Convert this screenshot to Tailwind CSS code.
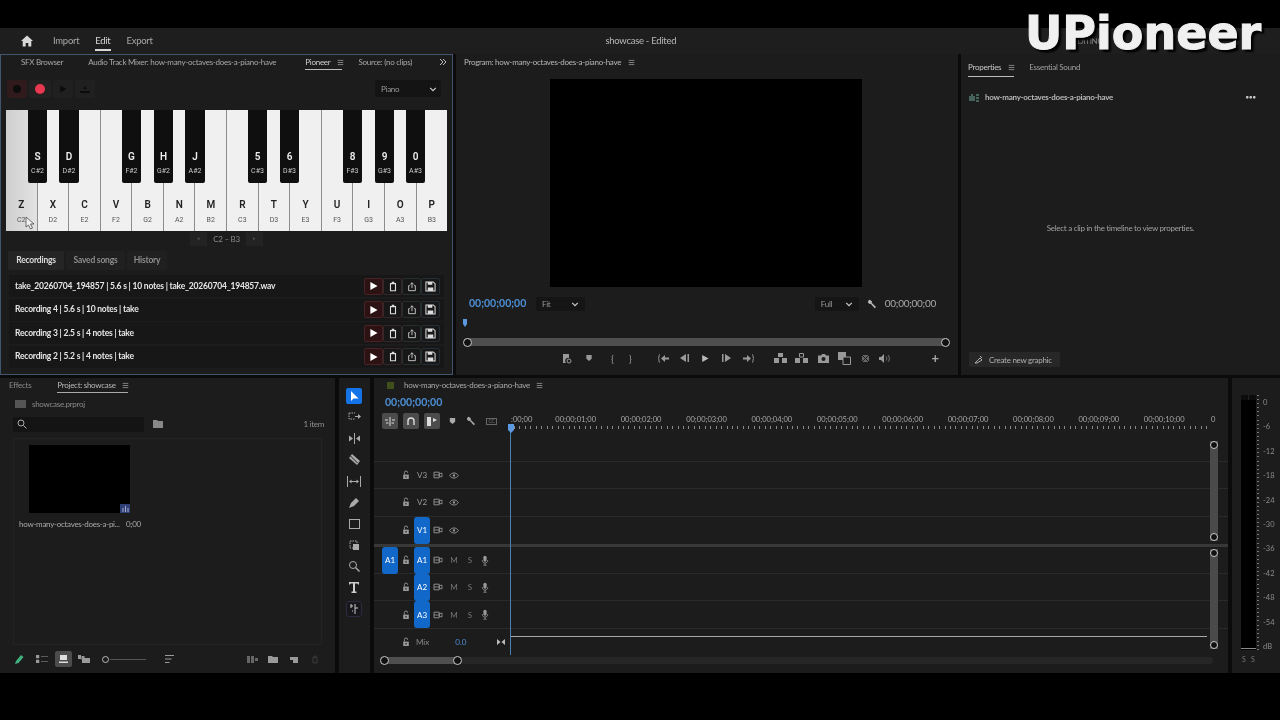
<!DOCTYPE html>
<html>
<head>
<meta charset="utf-8">
<script src="https://cdn.jsdelivr.net/npm/@tailwindcss/browser@4"></script>
</head>
<body class="bg-black">
<svg class="hidden">
  <symbol id="menu" viewBox="0 0 10 10"><path d="M1 2h8M1 5h8M1 8h8" stroke="currentColor" stroke-width="1" fill="none"/></symbol>
  <symbol id="chev" viewBox="0 0 10 10"><path d="M1.500 3.500L5 7l3.500-3.500" stroke="currentColor" stroke-width="1.500" fill="none"/></symbol>
  <symbol id="play" viewBox="0 0 10 10"><path d="M1.500 0.500L9.500 5l-8 4.500z" fill="currentColor"/></symbol>
  <symbol id="trash" viewBox="0 0 12 12"><path d="M4.500 1h3M3 2.500h6v8.500H3z" stroke="currentColor" stroke-width="1.300" fill="none"/></symbol>
  <symbol id="share" viewBox="0 0 12 12"><path d="M3.500 5H2v6h8V5H8.500M6 8V1.500M4 3.500L6 1.500l2 2" stroke="currentColor" stroke-width="1.100" fill="none"/></symbol>
  <symbol id="save" viewBox="0 0 12 12"><path d="M1 1h8l2 2v8H1z" stroke="currentColor" stroke-width="1.100" fill="none"/><path d="M3 1h5v3H3zM3 7h6v4H3z" fill="currentColor"/></symbol>
  <symbol id="lock" viewBox="0 0 10 12"><path d="M1.500 5.500h7v5.500h-7z" fill="currentColor"/><path d="M3 5.500V3a2 2 0 0 1 4 0v.5" stroke="currentColor" stroke-width="1.100" fill="none"/><rect x="4.300" y="7.200" width="1.400" height="2" fill="#1c1c1c"/></symbol>
  <symbol id="film" viewBox="0 0 12 10"><path d="M1 1.500h6.500v7H1z" stroke="currentColor" stroke-width="1.100" fill="none"/><path d="M7.500 3.500L11 2.500v5l-3.500-1z" stroke="currentColor" stroke-width="1" fill="none"/><path d="M1 5h6" stroke="currentColor"/></symbol>
  <symbol id="eye" viewBox="0 0 12 8"><path d="M.8 4C2.500 1.600 4 1 6 1s3.500.6 5.200 3C9.500 6.400 8 7 6 7S2.500 6.400.8 4z" stroke="currentColor" stroke-width="1.100" fill="none"/><circle cx="6" cy="4" r="1.400" fill="currentColor"/></symbol>
  <symbol id="mic" viewBox="0 0 10 14"><rect x="3" y="1" width="4" height="7.500" rx="2" fill="currentColor"/><path d="M1.500 6.500c0 5 7 5 7 0M5 10.500V13M3 13h4" stroke="currentColor" fill="none"/></symbol>
  <symbol id="wrench" viewBox="0 0 12 12"><path d="M2 1.500l1.500-.5 2.500 2-.4 1.500L10.800 9.500 9.300 11 4.500 5.800 3 6 1 3.800z" fill="currentColor"/></symbol>
  <symbol id="marker" viewBox="0 0 10 12"><path d="M1 1.500h8v5.500L5 10.500 1 7z" fill="currentColor"/></symbol>
</svg>

<div class="w-[1280px] h-[720px] flex flex-col bg-black overflow-hidden relative font-['Lato',sans-serif] whitespace-nowrap tracking-[-0.28px] text-[9px] text-[#b4b4b4] blur-[0.35px]">
  <div class="h-[28px] shrink-0 bg-black"></div>

  <!-- app header -->
  <header class="h-[26px] shrink-0 bg-[#1e1e1e] relative flex items-center pl-[21px]">
    <svg class="w-[12px] h-[12px] text-[#d8d8d8]" viewBox="0 0 12 12"><path d="M6 .5L0 6h1.700v5.500h3V8h2.600v3.500h3V6H12z" fill="currentColor"/></svg>
    <nav class="flex ml-[20px] gap-[16px] text-[#a8a8a8] text-[9.500px]">
      <span>Import</span>
      <span class="text-[#d8d8d8] relative">Edit<span class="absolute left-0 right-0 top-[15px] h-[2px] bg-[#d8d8d8]"></span></span>
      <span>Export</span>
    </nav>
    <div class="flex-1 flex justify-center ml-[50px] text-[#b8b8b8] text-[9.500px]">showcase - Edited</div>
    <div class="w-[201px] shrink-0 text-[8px] flex items-center justify-end pr-[12px]">
      <span class="mr-[165px] text-[#888]">EDITING</span>
      <svg class="w-[10px] h-[10px] text-[#aaa]" viewBox="0 0 10 10"><path d="M6 1h3v3M9 1L6 4M1 6v3h3M1 9l3-3" stroke="currentColor" fill="none"/></svg>
    </div>
  </header>

  <!-- upper row -->
  <div class="h-[321px] shrink-0 flex gap-[3px] bg-[#0b0b0b]">
    <!-- Pioneer panel -->
    <section class="w-[453px] shrink-0 bg-[#1c1c1c] border border-[#41556e] flex flex-col px-[5px]">
      <div class="h-[14px] shrink-0 flex items-center relative text-[#a8a8a8] text-[8px]">
        <span class="ml-[15px]">SFX Browser</span>
        <span class="ml-[25px]">Audio Track Mixer: how-many-octaves-does-a-piano-have</span>
        <span class="ml-[29px] text-[#cfcfcf] relative">Pioneer<span class="absolute left-0 w-[37px] top-[13px] h-px bg-[#bbb]"></span></span>
        <svg class="w-[7px] h-[7px] ml-[7px] text-[#aaa]"><use href="#menu"/></svg>
        <span class="ml-[14px]">Source: (no clips)</span>
        <svg class="w-[8px] h-[8px] ml-auto text-[#bbb]" viewBox="0 0 8 8"><path d="M1 1l3 3-3 3M4 1l3 3-3 3" stroke="currentColor" fill="none"/></svg>
      </div>
      <div class="h-[17px] mt-[11px] shrink-0 flex items-center gap-[2px] pl-[1px]">
        <span class="w-[20px] h-[18px] rounded-[2px] bg-[#301a1c] flex items-center justify-center"><span class="w-[8px] h-[8px] rounded-full bg-[#0c0c0c]"></span></span>
        <span class="w-[22px] h-[18px] rounded-[2px] bg-[#222020] flex items-center justify-center"><span class="w-[10px] h-[10px] rounded-full bg-[#e8384f]"></span></span>
        <span class="w-[20px] h-[18px] rounded-[2px] bg-[#202020] flex items-center justify-center text-[#0c0c0c]"><svg class="w-[8px] h-[8px]"><use href="#play"/></svg></span>
        <span class="w-[20px] h-[18px] rounded-[2px] bg-[#202020] flex items-center justify-center"><svg class="w-[10px] h-[8px] text-[#0c0c0c]" viewBox="0 0 10 8"><path d="M5 1L7 4H3zM0 6h10v2H0z" fill="currentColor"/></svg></span>
        <span class="ml-auto mr-[6px] w-[66px] h-[17px] bg-[#141414] rounded-[2px] flex items-center justify-between pl-[6px] pr-[4px] text-[8px] text-[#999]">Piano<svg class="w-[8px] h-[8px] text-[#ccc]"><use href="#chev"/></svg></span>
      </div>

      <!-- keyboard -->
      <div class="relative h-[121px] mt-[13px] shrink-0 flex gap-[1px] w-[441px] bg-[#8d8d8d] font-['Roboto',sans-serif] tracking-normal">
        <div class="flex-1 bg-gradient-to-r from-[#cfcfcf] to-[#e2e2e2] flex flex-col items-center justify-end pb-[6px] text-[#222]"><b class="text-[10px] font-semibold leading-[14px]">Z</b><span class="text-[7px] leading-[10px] mt-[3px] text-[#555]">C2</span></div>
        <div class="flex-1 bg-[#f0f0f0] flex flex-col items-center justify-end pb-[6px] text-[#222]"><b class="text-[10px] font-semibold leading-[14px]">X</b><span class="text-[7px] leading-[10px] mt-[3px] text-[#555]">D2</span></div>
        <div class="flex-1 bg-[#f0f0f0] flex flex-col items-center justify-end pb-[6px] text-[#222]"><b class="text-[10px] font-semibold leading-[14px]">C</b><span class="text-[7px] leading-[10px] mt-[3px] text-[#555]">E2</span></div>
        <div class="flex-1 bg-[#f0f0f0] flex flex-col items-center justify-end pb-[6px] text-[#222]"><b class="text-[10px] font-semibold leading-[14px]">V</b><span class="text-[7px] leading-[10px] mt-[3px] text-[#555]">F2</span></div>
        <div class="flex-1 bg-[#f0f0f0] flex flex-col items-center justify-end pb-[6px] text-[#222]"><b class="text-[10px] font-semibold leading-[14px]">B</b><span class="text-[7px] leading-[10px] mt-[3px] text-[#555]">G2</span></div>
        <div class="flex-1 bg-[#f0f0f0] flex flex-col items-center justify-end pb-[6px] text-[#222]"><b class="text-[10px] font-semibold leading-[14px]">N</b><span class="text-[7px] leading-[10px] mt-[3px] text-[#555]">A2</span></div>
        <div class="flex-1 bg-[#f0f0f0] flex flex-col items-center justify-end pb-[6px] text-[#222]"><b class="text-[10px] font-semibold leading-[14px]">M</b><span class="text-[7px] leading-[10px] mt-[3px] text-[#555]">B2</span></div>
        <div class="flex-1 bg-[#f0f0f0] flex flex-col items-center justify-end pb-[6px] text-[#222]"><b class="text-[10px] font-semibold leading-[14px]">R</b><span class="text-[7px] leading-[10px] mt-[3px] text-[#555]">C3</span></div>
        <div class="flex-1 bg-[#f0f0f0] flex flex-col items-center justify-end pb-[6px] text-[#222]"><b class="text-[10px] font-semibold leading-[14px]">T</b><span class="text-[7px] leading-[10px] mt-[3px] text-[#555]">D3</span></div>
        <div class="flex-1 bg-[#f0f0f0] flex flex-col items-center justify-end pb-[6px] text-[#222]"><b class="text-[10px] font-semibold leading-[14px]">Y</b><span class="text-[7px] leading-[10px] mt-[3px] text-[#555]">E3</span></div>
        <div class="flex-1 bg-[#f0f0f0] flex flex-col items-center justify-end pb-[6px] text-[#222]"><b class="text-[10px] font-semibold leading-[14px]">U</b><span class="text-[7px] leading-[10px] mt-[3px] text-[#555]">F3</span></div>
        <div class="flex-1 bg-[#f0f0f0] flex flex-col items-center justify-end pb-[6px] text-[#222]"><b class="text-[10px] font-semibold leading-[14px]">I</b><span class="text-[7px] leading-[10px] mt-[3px] text-[#555]">G3</span></div>
        <div class="flex-1 bg-[#f0f0f0] flex flex-col items-center justify-end pb-[6px] text-[#222]"><b class="text-[10px] font-semibold leading-[14px]">O</b><span class="text-[7px] leading-[10px] mt-[3px] text-[#555]">A3</span></div>
        <div class="flex-1 bg-[#f0f0f0] flex flex-col items-center justify-end pb-[6px] text-[#222]"><b class="text-[10px] font-semibold leading-[14px]">P</b><span class="text-[7px] leading-[10px] mt-[3px] text-[#555]">B3</span></div>
        <!-- black keys -->
        <div class="absolute top-0 left-[22px] w-[19px] h-[73px] bg-[#0f0f0f] rounded-b-[2px] flex flex-col items-center justify-end pb-[7px] text-[#eee]"><b class="text-[10px] font-semibold leading-[14px]">S</b><span class="text-[7px] leading-[10px] mt-[2px] text-[#ccc]">C#2</span></div>
        <div class="absolute top-0 left-[53px] w-[20px] h-[73px] bg-[#0f0f0f] rounded-b-[2px] flex flex-col items-center justify-end pb-[7px] text-[#eee]"><b class="text-[10px] font-semibold leading-[14px]">D</b><span class="text-[7px] leading-[10px] mt-[2px] text-[#ccc]">D#2</span></div>
        <div class="absolute top-0 left-[116px] w-[19px] h-[73px] bg-[#0f0f0f] rounded-b-[2px] flex flex-col items-center justify-end pb-[7px] text-[#eee]"><b class="text-[10px] font-semibold leading-[14px]">G</b><span class="text-[7px] leading-[10px] mt-[2px] text-[#ccc]">F#2</span></div>
        <div class="absolute top-0 left-[148px] w-[19px] h-[73px] bg-[#0f0f0f] rounded-b-[2px] flex flex-col items-center justify-end pb-[7px] text-[#eee]"><b class="text-[10px] font-semibold leading-[14px]">H</b><span class="text-[7px] leading-[10px] mt-[2px] text-[#ccc]">G#2</span></div>
        <div class="absolute top-0 left-[179px] w-[20px] h-[73px] bg-[#0f0f0f] rounded-b-[2px] flex flex-col items-center justify-end pb-[7px] text-[#eee]"><b class="text-[10px] font-semibold leading-[14px]">J</b><span class="text-[7px] leading-[10px] mt-[2px] text-[#ccc]">A#2</span></div>
        <div class="absolute top-0 left-[242px] w-[19px] h-[73px] bg-[#0f0f0f] rounded-b-[2px] flex flex-col items-center justify-end pb-[7px] text-[#eee]"><b class="text-[10px] font-semibold leading-[14px]">5</b><span class="text-[7px] leading-[10px] mt-[2px] text-[#ccc]">C#3</span></div>
        <div class="absolute top-0 left-[274px] w-[19px] h-[73px] bg-[#0f0f0f] rounded-b-[2px] flex flex-col items-center justify-end pb-[7px] text-[#eee]"><b class="text-[10px] font-semibold leading-[14px]">6</b><span class="text-[7px] leading-[10px] mt-[2px] text-[#ccc]">D#3</span></div>
        <div class="absolute top-0 left-[337px] w-[19px] h-[73px] bg-[#0f0f0f] rounded-b-[2px] flex flex-col items-center justify-end pb-[7px] text-[#eee]"><b class="text-[10px] font-semibold leading-[14px]">8</b><span class="text-[7px] leading-[10px] mt-[2px] text-[#ccc]">F#3</span></div>
        <div class="absolute top-0 left-[369px] w-[19px] h-[73px] bg-[#0f0f0f] rounded-b-[2px] flex flex-col items-center justify-end pb-[7px] text-[#eee]"><b class="text-[10px] font-semibold leading-[14px]">9</b><span class="text-[7px] leading-[10px] mt-[2px] text-[#ccc]">G#3</span></div>
        <div class="absolute top-0 left-[400px] w-[19px] h-[73px] bg-[#0f0f0f] rounded-b-[2px] flex flex-col items-center justify-end pb-[7px] text-[#eee]"><b class="text-[10px] font-semibold leading-[14px]">0</b><span class="text-[7px] leading-[10px] mt-[2px] text-[#ccc]">A#3</span></div>
        <!-- cursor -->
        <svg class="absolute left-[19px] top-[106px] w-[10px] h-[14px]" viewBox="0 0 10 14"><path d="M1 1v10l2.500-2 2 4 2-1-2-4H9z" fill="#f2f2f2" stroke="#333" stroke-width=".7"/></svg>
      </div>

      <div class="h-[14px] mt-[1px] shrink-0 flex items-center justify-center gap-[3px] w-[441px] text-[8px] text-[#888]">
        <span class="w-[17px] h-[14px] bg-[#232323] flex items-center justify-center text-[5px] text-[#555]">◂</span>
        <span class="w-[33px] text-center">C2 – B3</span>
        <span class="w-[17px] h-[14px] bg-[#232323] flex items-center justify-center text-[5px] text-[#555]">▸</span>
      </div>

      <div class="h-[19px] mt-[5px] shrink-0 flex gap-[2px] pl-[2px] text-[8.500px] font-bold tracking-[-0.2px]">
        <span class="w-[56px] bg-[#252525] rounded-[2px] flex items-center justify-center text-[#dcdcdc]">Recordings</span>
        <span class="w-[59px] bg-[#202020] rounded-[2px] flex items-center justify-center text-[#8d8d8d]">Saved songs</span>
        <span class="w-[40px] bg-[#202020] rounded-[2px] flex items-center justify-center text-[#8d8d8d]">History</span>
      </div>

      <ul class="mt-[5px] ml-[3px] mr-[3px] flex flex-col gap-[1.500px] text-[#e6e6e6] font-bold text-[8.500px] tracking-[-0.2px]">
        <li class="h-[22px] bg-[#171717] rounded-[2px] flex items-center pl-[6px] pr-[4px]">
          <span class="flex-1">take_20260704_194857 | 5.6 s | 10 notes | take_20260704_194857.wav</span>
          <span class="w-[19px] h-[17px] rounded-[2px] bg-[#2d1214] border border-[#4a2226] flex items-center justify-center text-white"><svg class="w-[9px] h-[10px]"><use href="#play"/></svg></span>
          <span class="w-[19px] h-[17px] rounded-[2px] border border-[#352628] flex items-center justify-center text-[#ddd]"><svg class="w-[10px] h-[11px]"><use href="#trash"/></svg></span>
          <span class="w-[19px] h-[17px] rounded-[2px] border border-[#25302b] flex items-center justify-center text-[#ccc]"><svg class="w-[10px] h-[11px]"><use href="#share"/></svg></span>
          <span class="w-[19px] h-[17px] rounded-[2px] border border-[#252d35] flex items-center justify-center text-[#ddd]"><svg class="w-[11px] h-[11px]"><use href="#save"/></svg></span>
        </li>
        <li class="h-[22px] bg-[#171717] rounded-[2px] flex items-center pl-[6px] pr-[4px]">
          <span class="flex-1">Recording 4 | 5.6 s | 10 notes | take</span>
          <span class="w-[19px] h-[17px] rounded-[2px] bg-[#2d1214] border border-[#4a2226] flex items-center justify-center text-white"><svg class="w-[9px] h-[10px]"><use href="#play"/></svg></span>
          <span class="w-[19px] h-[17px] rounded-[2px] border border-[#352628] flex items-center justify-center text-[#ddd]"><svg class="w-[10px] h-[11px]"><use href="#trash"/></svg></span>
          <span class="w-[19px] h-[17px] rounded-[2px] border border-[#25302b] flex items-center justify-center text-[#ccc]"><svg class="w-[10px] h-[11px]"><use href="#share"/></svg></span>
          <span class="w-[19px] h-[17px] rounded-[2px] border border-[#252d35] flex items-center justify-center text-[#ddd]"><svg class="w-[11px] h-[11px]"><use href="#save"/></svg></span>
        </li>
        <li class="h-[22px] bg-[#171717] rounded-[2px] flex items-center pl-[6px] pr-[4px]">
          <span class="flex-1">Recording 3 | 2.5 s | 4 notes | take</span>
          <span class="w-[19px] h-[17px] rounded-[2px] bg-[#2d1214] border border-[#4a2226] flex items-center justify-center text-white"><svg class="w-[9px] h-[10px]"><use href="#play"/></svg></span>
          <span class="w-[19px] h-[17px] rounded-[2px] border border-[#352628] flex items-center justify-center text-[#ddd]"><svg class="w-[10px] h-[11px]"><use href="#trash"/></svg></span>
          <span class="w-[19px] h-[17px] rounded-[2px] border border-[#25302b] flex items-center justify-center text-[#ccc]"><svg class="w-[10px] h-[11px]"><use href="#share"/></svg></span>
          <span class="w-[19px] h-[17px] rounded-[2px] border border-[#252d35] flex items-center justify-center text-[#ddd]"><svg class="w-[11px] h-[11px]"><use href="#save"/></svg></span>
        </li>
        <li class="h-[22px] bg-[#171717] rounded-[2px] flex items-center pl-[6px] pr-[4px]">
          <span class="flex-1">Recording 2 | 5.2 s | 4 notes | take</span>
          <span class="w-[19px] h-[17px] rounded-[2px] bg-[#2d1214] border border-[#4a2226] flex items-center justify-center text-white"><svg class="w-[9px] h-[10px]"><use href="#play"/></svg></span>
          <span class="w-[19px] h-[17px] rounded-[2px] border border-[#352628] flex items-center justify-center text-[#ddd]"><svg class="w-[10px] h-[11px]"><use href="#trash"/></svg></span>
          <span class="w-[19px] h-[17px] rounded-[2px] border border-[#25302b] flex items-center justify-center text-[#ccc]"><svg class="w-[10px] h-[11px]"><use href="#share"/></svg></span>
          <span class="w-[19px] h-[17px] rounded-[2px] border border-[#252d35] flex items-center justify-center text-[#ddd]"><svg class="w-[11px] h-[11px]"><use href="#save"/></svg></span>
        </li>
      </ul>
    </section>

    <!-- program monitor -->
    <section class="w-[502px] shrink-0 bg-[#1c1c1c] flex flex-col">
      <div class="h-[16px] shrink-0 flex items-center pl-[8px] text-[8px] text-[#b8b8b8]">Program: how-many-octaves-does-a-piano-have<svg class="w-[7px] h-[7px] ml-[7px] text-[#aaa]"><use href="#menu"/></svg></div>
      <div class="mt-[9px] ml-[94px] w-[312px] h-[208px] shrink-0 bg-black"></div>
      <div class="h-[17px] mt-[8px] shrink-0 flex items-center pl-[13px] pr-[22px]">
        <span class="text-[#4d8fd6] text-[10.500px] font-bold tracking-normal w-[67px]">00;00;00;00</span>
        <span class="w-[49px] h-[14px] bg-[#151515] rounded-[2px] flex items-center justify-between px-[6px] text-[8px] text-[#999]">Fit<svg class="w-[8px] h-[8px] text-[#ccc]"><use href="#chev"/></svg></span>
        <span class="ml-auto w-[44px] h-[14px] bg-[#151515] rounded-[2px] flex items-center justify-between px-[6px] text-[8px] text-[#999]">Full<svg class="w-[8px] h-[8px] text-[#ccc]"><use href="#chev"/></svg></span>
        <svg class="w-[10px] h-[10px] ml-[8px] text-[#bbb]"><use href="#wrench"/></svg>
        <span class="ml-[8px] text-[10px] text-[#a8a8a8]">00;00;00;00</span>
      </div>
      <div class="h-[26px] shrink-0 pl-[7px] pt-[7px]"><svg class="block w-[4px] h-[8px]" viewBox="0 0 4 8"><path d="M0 0h4v5L2 8 0 5z" fill="#5b9ae0"/></svg></div>
      <div class="ml-[8px] w-[485px] h-[8px] shrink-0 rounded-full bg-[#4f4f4f] relative">
        <span class="absolute left-[-1px] top-[-0.500px] w-[9px] h-[9px] rounded-full bg-[#111] border border-[#ccc]"></span>
        <span class="absolute right-[-1px] top-[-0.500px] w-[9px] h-[9px] rounded-full bg-[#111] border border-[#ccc]"></span>
      </div>
      <div class="mt-[5px] h-[14px] shrink-0 flex items-center text-[#999]">
        <svg class="ml-[106px] w-[10px] h-[11px]" viewBox="0 0 10 11"><path d="M1 1h6v4a3 3 0 0 0-3 5H1z" fill="currentColor"/><circle cx="7" cy="8" r="2" fill="none" stroke="currentColor"/></svg>
        <svg class="ml-[13px] w-[8px] h-[8px]"><use href="#marker"/></svg>
        <span class="ml-[18px] text-[10px] leading-none">{</span>
        <span class="ml-[15px] text-[10px] leading-none">}</span>
        <svg class="ml-[27px] w-[11px] h-[9px]" viewBox="0 0 11 9"><path d="M2 .5C1 .5 1 2 1 3S0 4.500 0 4.500 1 5 1 6s0 2.500 1 2.500" stroke="currentColor" fill="none"/><path d="M3 4.500L7 1v2.500h4v2H7V8z" fill="currentColor"/></svg>
        <svg class="ml-[11px] w-[9px] h-[8px]" viewBox="0 0 9 8"><path d="M6 0v8L0 4zM7.500 0H9v8H7.500z" fill="currentColor"/></svg>
        <svg class="ml-[12px] w-[8px] h-[9px] text-[#bbb]"><use href="#play"/></svg>
        <svg class="ml-[13px] w-[9px] h-[8px]" viewBox="0 0 9 8"><path d="M3 0v8l6-4zM0 0h1.500v8H0z" fill="currentColor"/></svg>
        <svg class="ml-[12px] w-[11px] h-[9px]" viewBox="0 0 11 9"><path d="M9 .5c1 0 1 1.500 1 2.500s1 1.500 1 1.500-1 .5-1 1.500 0 2.500-1 2.500" stroke="currentColor" fill="none"/><path d="M8 4.500L4 1v2.500H0v2h4V8z" fill="currentColor"/></svg>
        <svg class="ml-[20px] w-[13px] h-[10px]" viewBox="0 0 13 10"><path d="M0 5h5v5H0zM8 5h5v5H8zM4 0h5v4H4z" fill="currentColor"/></svg>
        <svg class="ml-[8px] w-[13px] h-[10px]" viewBox="0 0 13 10"><path d="M0 5h5v5H0zM8 5h5v5H8z" fill="currentColor"/><path d="M4.500.5h4v3.500h-4z" stroke="currentColor" fill="none"/></svg>
        <svg class="ml-[10px] w-[11px] h-[9px]" viewBox="0 0 11 9"><path d="M0 1.500h3L4 0h3l1 1.500h3V9H0z" fill="currentColor"/><circle cx="5.500" cy="5" r="2" fill="#1c1c1c"/></svg>
        <svg class="ml-[9px] w-[13px] h-[13px]" viewBox="0 0 13 13"><path d="M0 0h8v8H0z" fill="currentColor"/><path d="M5 5h7.500v7.500H5z" stroke="currentColor" fill="#1c1c1c"/></svg>
        <svg class="ml-[10px] w-[9px] h-[9px] text-[#666]" viewBox="0 0 9 9"><path d="M1 1h7v7H1z" fill="currentColor"/><path d="M1 1l7 7M8 1L1 8" stroke="#1c1c1c"/></svg>
        <svg class="ml-[9px] w-[11px] h-[9px]" viewBox="0 0 11 9"><path d="M0 3h2l3-3v9L2 6H0z" fill="currentColor"/><path d="M7 2.500c1 1 1 3 0 4M9 1c1.800 2 1.800 5 0 7" stroke="currentColor" fill="none" stroke-width=".7"/></svg>
        <span class="ml-[41px] text-[#aaa] text-[13px] leading-none font-bold">+</span>
      </div>
    </section>

    <!-- properties -->
    <section class="flex-1 bg-[#1c1c1c] flex flex-col px-[7px]">
      <div class="h-[26px] shrink-0 flex items-center text-[8px]">
        <span class="text-[#c8c8c8] relative">Properties<span class="absolute left-0 w-[46px] top-[15px] h-px bg-[#bbb]"></span></span>
        <svg class="w-[7px] h-[7px] ml-[7px] text-[#aaa]"><use href="#menu"/></svg>
        <span class="ml-[14px] text-[#a0a0a0]">Essential Sound</span>
      </div>
      <div class="h-[34px] shrink-0 flex items-center font-bold text-[8px] text-[#b8b8b8]">
        <svg class="w-[10px] h-[9px] mr-[6px] ml-[1px] text-[#6fa89a]" viewBox="0 0 10 9"><path d="M1 3v5M3 1v7M5 3v5M7 2h3M7 5h3M7 8h3" stroke="currentColor" fill="none"/></svg>
        how-many-octaves-does-a-piano-have
        <span class="ml-auto mr-[17px] text-[#c8c8c8] font-bold tracking-normal text-[6px] leading-none">•••</span>
      </div>
      <div class="flex-1 flex items-center justify-center text-[8px] text-[#a0a0a0] pb-[11px]">Select a clip in the timeline to view properties.</div>
      <div class="h-[15px] mb-[8px] ml-[1px] w-[91px] shrink-0 bg-[#272727] rounded-[2px] flex items-center text-[8px] text-[#b0b0b0] pl-[5px]">
        <svg class="w-[9px] h-[9px] mr-[6px]" viewBox="0 0 9 9"><path d="M1 8l5-5 2 2-5 3zM6 1l2 2" stroke="currentColor" fill="none"/></svg>
        Create new graphic
      </div>
    </section>
  </div>

  <div class="h-[3px] shrink-0 bg-[#0b0b0b]"></div>

  <!-- lower row -->
  <div class="h-[295px] shrink-0 flex gap-[4px] bg-[#0b0b0b]">
    <!-- project -->
    <section class="w-[335px] shrink-0 bg-[#1c1c1c] flex flex-col px-[13px]">
      <div class="h-[14px] shrink-0 flex items-center text-[8px] -ml-[4px]">
        <span class="text-[#8a8a8a]">Effects</span>
        <span class="ml-[26px] text-[#b8b8b8] relative">Project: showcase<span class="absolute left-0 w-[71px] top-[13px] h-px bg-[#aaa]"></span></span>
        <svg class="w-[7px] h-[7px] ml-[6px] text-[#aaa]"><use href="#menu"/></svg>
      </div>
      <div class="h-[16px] mt-[4px] shrink-0 flex items-center text-[8px] text-[#8a8a8a]">
        <svg class="w-[11px] h-[8px] mr-[6px] ml-[2px]" viewBox="0 0 11 8"><path d="M0 0h11v8H0z" fill="#555"/></svg>showcase.prproj
      </div>
      <div class="h-[16px] mt-[4px] shrink-0 flex items-center text-[8px] text-[#8f8f8f]">
        <span class="w-[131px] h-[15px] bg-[#141414] flex items-center pl-[4px]">
          <svg class="w-[10px] h-[10px] text-[#aaa]" viewBox="0 0 10 10"><circle cx="4" cy="4" r="3" stroke="currentColor" fill="none"/><path d="M6.500 6.500L9.500 9.500" stroke="currentColor"/></svg>
        </span>
        <svg class="w-[10px] h-[8px] ml-[9px] text-[#888]" viewBox="0 0 10 8"><path d="M0 0h4l1 1h5v7H0z" fill="currentColor"/></svg>
        <span class="ml-auto mr-[-2px]">1 item</span>
      </div>
      <div class="mt-[6px] h-[207px] shrink-0 border border-[#232323] relative">
        <div class="absolute left-[15px] top-[6px] w-[101px] h-[68px] bg-black">
          <span class="absolute right-0 bottom-0 w-[10px] h-[9px] bg-[#2f3f77] flex items-center justify-center"><svg class="w-[7px] h-[6px] text-[#aac]" viewBox="0 0 7 6"><path d="M1 2v4M3.500 0v6M6 2v4" stroke="currentColor"/></svg></span>
        </div>
        <div class="absolute left-[5px] top-[79px] flex text-[8px] text-[#aaa]"><span class="w-[107px]">how-many-octaves-does-a-pi...</span><span>0;00</span></div>
      </div>
      <div class="mt-[4px] h-[20px] shrink-0 flex items-center text-[#9a9a9a]">
        <svg class="w-[11px] h-[11px] ml-[1px] text-[#3fb27f]" viewBox="0 0 11 11"><path d="M1 10l1-3 5-6 2.500 2-5 6z" fill="currentColor"/></svg>
        <svg class="w-[12px] h-[8px] ml-[11px]" viewBox="0 0 12 8"><path d="M0 0h3v3H0zM0 5h3v3H0zM5 1.500h7M5 6.500h7" stroke="currentColor" fill="currentColor" stroke-width=".5"/></svg>
        <span class="w-[17px] h-[16px] ml-[7px] bg-[#4c4c4c] rounded-[2px] flex items-center justify-center"><svg class="w-[9px] h-[8px] text-[#ddd]" viewBox="0 0 9 8"><path d="M1 0h7v5H1zM0 6.500h9V8H0z" fill="currentColor"/></svg></span>
        <svg class="w-[12px] h-[8px] ml-[6px]" viewBox="0 0 12 8"><path d="M0 0h3v4H0zM3.500 1h3v4h-3zM4 3h8v5H4z" fill="currentColor"/></svg>
        <span class="w-[7px] h-[7px] ml-[12px] rounded-full border-[1.500px] border-[#bbb]"></span>
        <span class="w-[36px] h-px ml-[1px] bg-[#555]"></span>
        <svg class="w-[9px] h-[8px] ml-[19px]" viewBox="0 0 9 8"><path d="M0 .5h9M0 4h6.500M0 7.500h4.500" stroke="currentColor" stroke-width="1.200"/></svg>
        <svg class="w-[11px] h-[7px] ml-[73px] text-[#666]" viewBox="0 0 11 7"><path d="M0 0h3v7H0zM4 0h3v7H4zM8 2h3v3H8z" fill="currentColor"/></svg>
        <svg class="w-[10px] h-[7px] ml-[10px]" viewBox="0 0 10 7"><path d="M0 0h4l1 1h5v6H0z" fill="currentColor"/></svg>
        <svg class="w-[8px] h-[7px] ml-[12px]" viewBox="0 0 8 7"><path d="M0 1h8v6H3V4H0z" fill="currentColor"/></svg>
        <svg class="w-[8px] h-[9px] ml-[13px] text-[#444]"><use href="#trash"/></svg>
      </div>
    </section>

    <!-- tools -->
    <section class="w-[31px] shrink-0 bg-[#1c1c1c] flex flex-col items-center pt-[10px] pr-[1px] gap-[5.300px] text-[#aaa]">
      <span class="w-[16px] h-[16px] rounded-[2px] bg-[#1473e6] flex items-center justify-center"><svg class="w-[9px] h-[11px]" viewBox="0 0 9 11"><path d="M1 0v10l2.500-2.500H8.500z" fill="#fff"/></svg></span>
      <span class="w-[16px] h-[16px] flex items-center justify-center"><svg class="w-[13px] h-[11px]" viewBox="0 0 13 11"><path d="M1 1h6M1 1v6h6" stroke="currentColor" stroke-dasharray="1.500 1" fill="none"/><path d="M7 4h3V2l3 2.500L10 7V5H7z" fill="currentColor"/></svg></span>
      <span class="w-[16px] h-[16px] flex items-center justify-center"><svg class="w-[13px] h-[11px]" viewBox="0 0 13 11"><path d="M6 0h1v11H6z" fill="currentColor"/><path d="M5 5.500L1 2.500v6zM8 5.500l4-3v6z" fill="currentColor"/></svg></span>
      <span class="w-[16px] h-[16px] flex items-center justify-center"><svg class="w-[11px] h-[11px]" viewBox="0 0 11 11"><path d="M3 0l8 7-3 4-8-7z" fill="currentColor"/><path d="M1.500 2l7 7" stroke="#1c1c1c"/></svg></span>
      <span class="w-[16px] h-[16px] flex items-center justify-center"><svg class="w-[14px] h-[11px]" viewBox="0 0 14 11"><path d="M.5 0v11M13.500 0v11M3 5.500h8" stroke="currentColor" fill="none"/><path d="M2 5.500l2.500-2v4zM12 5.500l-2.500-2v4z" fill="currentColor"/></svg></span>
      <span class="w-[16px] h-[16px] flex items-center justify-center"><svg class="w-[11px] h-[11px]" viewBox="0 0 11 11"><path d="M0 11l2-5 5-5 3 3-5 5z" fill="currentColor"/></svg></span>
      <span class="w-[16px] h-[16px] flex items-center justify-center"><span class="w-[11px] h-[10px] border border-[#aaa]"></span></span>
      <span class="w-[16px] h-[16px] flex items-center justify-center"><svg class="w-[11px] h-[11px]" viewBox="0 0 11 11"><path d="M1 1h7v7H1z" stroke="currentColor" stroke-dasharray="1.500 1" fill="none"/><path d="M4 4h6v6H4z" fill="currentColor"/></svg></span>
      <span class="w-[16px] h-[16px] flex items-center justify-center"><svg class="w-[12px] h-[12px]" viewBox="0 0 12 12"><circle cx="5" cy="5" r="3.500" stroke="currentColor" fill="none"/><path d="M7.500 7.500L11.500 11.500" stroke="currentColor" stroke-width="1.400"/></svg></span>
      <span class="w-[16px] h-[16px] flex items-center justify-center"><svg class="w-[10px] h-[11px]" viewBox="0 0 10 11"><path d="M0 0h10v2.500H9L8.500 1.500H6V9.500H7.500V11h-5V9.500H4V1.500H1.500L1 2.500H0z" fill="#ccc"/></svg></span>
      <span class="w-[16px] h-[16px] rounded-[3px] bg-[#17171c] border border-[#2b2b3f] flex items-center justify-center"><svg class="w-[10px] h-[10px]" viewBox="0 0 10 10"><path d="M6 0v10M6 4h3M2 2h2M2 0v4M3 7h1" stroke="#ccc" fill="none"/></svg></span>
    </section>

    <!-- timeline -->
    <section class="w-[854px] shrink-0 bg-[#1c1c1c] flex flex-col relative">
      <div class="h-[14px] shrink-0 flex items-center pl-[13px] text-[8px] text-[#aaa]">
        <span class="w-[7px] h-[7px] bg-[#3f4f1c] mr-[10px]"></span>how-many-octaves-does-a-piano-have<svg class="w-[7px] h-[7px] ml-[6px] text-[#aaa]"><use href="#menu"/></svg>
      </div>
      <div class="h-[17px] mt-[2px] shrink-0 flex items-center pl-[11px] text-[#4d8fd6] text-[10.500px] font-bold tracking-normal">00;00;00;00</div>
      <div class="h-[20px] shrink-0 flex">
        <div class="w-[136px] shrink-0 flex items-center pl-[8px] text-[#aaa]">
          <span class="w-[16px] h-[16px] bg-[#4c4c4c] rounded-[2px] flex items-center justify-center"><svg class="w-[10px] h-[9px]" viewBox="0 0 10 9"><path d="M5 0v9M0 3h3M7 3h3M1 6h2.500M6.500 6H9" stroke="#ddd"/></svg></span>
          <span class="w-[16px] h-[16px] ml-[5px] bg-[#4c4c4c] rounded-[2px] flex items-center justify-center"><svg class="w-[8px] h-[8px]" viewBox="0 0 8 8"><path d="M1 8V4a3 3 0 0 1 6 0v4" stroke="#ddd" stroke-width="1.400" fill="none"/></svg></span>
          <span class="w-[16px] h-[16px] ml-[5px] bg-[#4c4c4c] rounded-[2px] flex items-center justify-center"><svg class="w-[10px] h-[9px]" viewBox="0 0 10 9"><path d="M0 0h4v9H0zM6 1l4 2-4 2z" fill="#ddd"/></svg></span>
          <svg class="w-[7px] h-[8px] ml-[9px]"><use href="#marker"/></svg>
          <svg class="w-[10px] h-[10px] ml-[10px]"><use href="#wrench"/></svg>
          <span class="ml-[10px] w-[11px] h-[7px] border border-[#666] text-[5px] leading-[5px] text-center text-[#777]">CC</span>
        </div>
        <div class="flex-1 relative text-[7.500px] tracking-normal text-[#a8a8a8]">
          <span class="absolute left-[1px] top-[4px] leading-[10px]">:00;00</span>
          <div class="absolute left-0 right-0 top-[4px] flex pl-[33px] leading-[10px]">
            <span class="w-[65.400px] text-center">00;00;01;00</span>
            <span class="w-[65.400px] text-center">00;00;02;00</span>
            <span class="w-[65.400px] text-center">00;00;03;00</span>
            <span class="w-[65.400px] text-center">00;00;04;00</span>
            <span class="w-[65.400px] text-center">00;00;05;00</span>
            <span class="w-[65.400px] text-center">00;00;06;00</span>
            <span class="w-[65.400px] text-center">00;00;07;00</span>
            <span class="w-[65.400px] text-center">00;00;08;00</span>
            <span class="w-[65.400px] text-center">00;00;09;00</span>
            <span class="w-[65.400px] text-center">00;00;10;00</span>
            <span class="ml-[14px]">0</span>
          </div>
          <div class="absolute left-[4px] w-[698px] top-[15px] h-[3px] bg-[repeating-linear-gradient(90deg,#8a8a8a_0,#8a8a8a_1px,transparent_1px,transparent_5.450px)]"></div>
        </div>
      </div>
      <div class="h-[31px] shrink-0 border-b border-[#2a2a2a]"></div>

      <!-- tracks -->
      <div class="flex flex-col text-[#9a9a9a] text-[8px] tracking-normal">
        <div class="h-[27.300px] flex items-center border-b border-[#2a2a2a]">
          <svg class="ml-[28px] w-[8px] h-[10px]"><use href="#lock"/></svg>
          <span class="w-[16px] ml-[4px] text-center">V3</span>
          <svg class="ml-[3px] w-[10px] h-[8px]"><use href="#film"/></svg>
          <svg class="ml-[6px] w-[10px] h-[7px]"><use href="#eye"/></svg>
        </div>
        <div class="h-[27.300px] flex items-center border-b border-[#2a2a2a]">
          <svg class="ml-[28px] w-[8px] h-[10px]"><use href="#lock"/></svg>
          <span class="w-[16px] ml-[4px] text-center">V2</span>
          <svg class="ml-[3px] w-[10px] h-[8px]"><use href="#film"/></svg>
          <svg class="ml-[6px] w-[10px] h-[7px]"><use href="#eye"/></svg>
        </div>
        <div class="h-[27.300px] flex items-center">
          <svg class="ml-[28px] w-[8px] h-[10px]"><use href="#lock"/></svg>
          <span class="w-[16px] h-[27px] ml-[4px] bg-[#1268c8] rounded-[3px] flex items-center justify-center text-white">V1</span>
          <svg class="ml-[3px] w-[10px] h-[8px]"><use href="#film"/></svg>
          <svg class="ml-[6px] w-[10px] h-[7px]"><use href="#eye"/></svg>
        </div>
        <div class="h-[3px] bg-[#383838]"></div>
        <div class="h-[27.300px] flex items-center border-b border-[#2a2a2a]">
          <span class="w-[16px] h-[27px] ml-[8px] bg-[#1268c8] rounded-[3px] flex items-center justify-center text-white">A1</span>
          <svg class="ml-[4px] w-[8px] h-[10px]"><use href="#lock"/></svg>
          <span class="w-[16px] h-[27px] ml-[4px] bg-[#1268c8] rounded-[3px] flex items-center justify-center text-white">A1</span>
          <svg class="ml-[3px] w-[10px] h-[8px]"><use href="#film"/></svg>
          <span class="ml-[7px] w-[8px] text-center text-[#777]">M</span><span class="ml-[8px] w-[8px] text-center text-[#777]">S</span>
          <svg class="ml-[7px] w-[8px] h-[11px]"><use href="#mic"/></svg>
        </div>
        <div class="h-[27.300px] flex items-center border-b border-[#2a2a2a]">
          <svg class="ml-[28px] w-[8px] h-[10px]"><use href="#lock"/></svg>
          <span class="w-[16px] h-[27px] ml-[4px] bg-[#1268c8] rounded-[3px] flex items-center justify-center text-white">A2</span>
          <svg class="ml-[3px] w-[10px] h-[8px]"><use href="#film"/></svg>
          <span class="ml-[7px] w-[8px] text-center text-[#777]">M</span><span class="ml-[8px] w-[8px] text-center text-[#777]">S</span>
          <svg class="ml-[7px] w-[8px] h-[11px]"><use href="#mic"/></svg>
        </div>
        <div class="h-[27.300px] flex items-center border-b border-[#2a2a2a]">
          <svg class="ml-[28px] w-[8px] h-[10px]"><use href="#lock"/></svg>
          <span class="w-[16px] h-[27px] ml-[4px] bg-[#1268c8] rounded-[3px] flex items-center justify-center text-white">A3</span>
          <svg class="ml-[3px] w-[10px] h-[8px]"><use href="#film"/></svg>
          <span class="ml-[7px] w-[8px] text-center text-[#777]">M</span><span class="ml-[8px] w-[8px] text-center text-[#777]">S</span>
          <svg class="ml-[7px] w-[8px] h-[11px]"><use href="#mic"/></svg>
        </div>
        <div class="h-[27.300px] flex items-center relative">
          <svg class="ml-[28px] w-[8px] h-[10px]"><use href="#lock"/></svg>
          <span class="ml-[6px] text-[#888]">Mix</span>
          <span class="ml-[26px] text-[#4d8fd6]">0.0</span>
          <svg class="ml-[31px] w-[8px] h-[6px] text-[#bbb]" viewBox="0 0 8 6"><path d="M0 0l3.500 3L0 6zM8 0L4.500 3 8 6z" fill="currentColor"/></svg>
          <span class="absolute left-[136px] w-[697px] top-[7px] h-[1.500px] bg-[#a8a8a8]"></span>
        </div>
      </div>

      <!-- bottom scrollbar -->
      <div class="mt-[1px] ml-[6px] w-[833px] h-[7px] rounded-full bg-[#262626] relative">
        <span class="absolute left-0 top-0 w-[78px] h-[7px] rounded-full bg-[#4f4f4f]"></span>
        <span class="absolute left-[0px] top-[-1px] w-[9px] h-[9px] rounded-full bg-[#111] border border-[#ccc]"></span>
        <span class="absolute left-[73px] top-[-1px] w-[9px] h-[9px] rounded-full bg-[#111] border border-[#ccc]"></span>
      </div>

      <!-- playhead + vertical scrollbars lie over the tracks -->
      <div class="absolute left-[136px] top-[47px] w-px h-[230px] bg-[#4d7eb0]"></div>
      <svg class="absolute left-[134px] top-[46px] w-[6px] h-[9px]" viewBox="0 0 6 9"><path d="M0 0h6v6L3 9 0 6z" fill="#5b9ae0"/></svg>
      <div class="absolute left-[836px] top-[63px] w-[8px] h-[100px] bg-[#4a4a4a]">
        <span class="absolute left-[0px] top-[0px] w-[8px] h-[8px] rounded-full bg-[#111] border border-[#ccc]"></span>
        <span class="absolute left-[0px] bottom-[0px] w-[8px] h-[8px] rounded-full bg-[#111] border border-[#ccc]"></span>
      </div>
      <div class="absolute left-[836px] top-[171px] w-[8px] h-[100px] bg-[#4a4a4a]">
        <span class="absolute left-[0px] top-[0px] w-[8px] h-[8px] rounded-full bg-[#111] border border-[#ccc]"></span>
        <span class="absolute left-[0px] bottom-[0px] w-[8px] h-[8px] rounded-full bg-[#111] border border-[#ccc]"></span>
      </div>
    </section>

    <!-- meter -->
    <section class="flex-1 bg-[#1c1c1c] flex flex-col pl-[9px] pt-[17px] text-[7.500px] tracking-normal text-[#8a8a8a]">
      <div class="flex h-[255px]">
        <div class="w-[15px] bg-black flex flex-col justify-between">
          <div class="h-[5px] flex gap-px bg-[#222]"><span class="flex-1 bg-[#0c0c0c]"></span><span class="flex-1 bg-[#0c0c0c]"></span></div>
          <div class="h-[1px] bg-[#8a8a8a] mb-[1px]"></div>
        </div>
        <div class="w-[2px] ml-[1px] bg-[repeating-linear-gradient(180deg,#777_0,#777_1px,transparent_1px,transparent_4.100px)]"></div>
        <div class="ml-[4px] flex flex-col justify-between pt-[4px] mb-[-1px] leading-[8px]">
          <span>0</span><span>-6</span><span>-12</span><span>-18</span><span>-24</span><span>-30</span><span>-36</span><span>-42</span><span>-48</span><span>-54</span><span>dB</span>
        </div>
      </div>
      <div class="flex gap-[3px] mt-[4px] text-[7px] text-[#777]"><span class="w-[6px] text-center">S</span><span class="w-[6px] text-center">S</span></div>
    </section>
  </div>

  <div class="flex-1 bg-black"></div>

  <!-- channel watermark, on top of everything -->
  <div class="absolute left-[1025px] top-[8px] font-['DejaVu_Sans',sans-serif] font-bold tracking-normal text-[46px] leading-[50px] text-[#f0f0f0] [-webkit-text-stroke:1px_#f0f0f0] [text-shadow:3px_3px_2px_#000]">UPioneer</div>
</div>
</body>
</html>
